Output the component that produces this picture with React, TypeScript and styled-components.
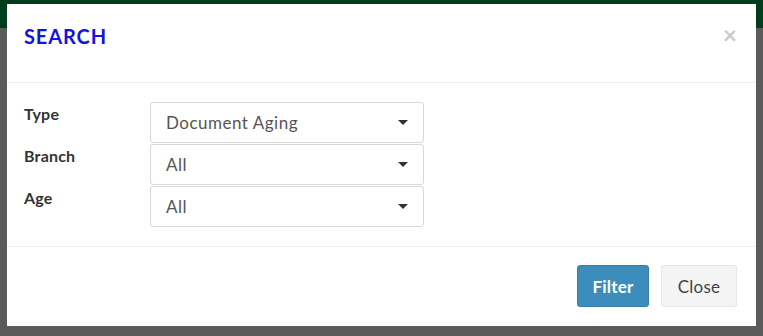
import React from 'react';
import styled, { createGlobalStyle } from 'styled-components';

const GlobalStyle = createGlobalStyle`
  html, body {
    margin: 0;
    padding: 0;
    background: #5b5b5b;
    font-family: Lato, "Noto Sans", sans-serif;
  }
`;

const Page = styled.div`
  position: relative;
  width: 763px;
  height: 336px;
  background: #5b5b5b;
  overflow: hidden;
`;

const TopBar = styled.div`
  height: 28px;
  background: #003d1c;
`;

const Modal = styled.div`
  position: absolute;
  left: 7px;
  top: 4px;
  width: 749px;
  height: 322px;
  background: #fff;
  display: flex;
  flex-direction: column;
`;

const Header = styled.div`
  border-bottom: 1px solid #f0f0f0;
  display: flex;
  align-items: flex-start;
  justify-content: space-between;
  padding: 0 19px 0 17px;
  box-sizing: border-box;
  height: 79px;
`;

const Title = styled.h4`
  margin: 20px 0 0;
  font-size: 20px;
  font-weight: 700;
  letter-spacing: 0.9px;
  color: #1414e0;
  line-height: 24px;
`;

const CloseX = styled.span`
  margin-top: 19px;
  font-size: 24px;
  font-weight: 700;
  color: #c9c9c9;
  line-height: 24px;
`;

const Body = styled.div`
  padding: 19px 17px 19px 17px;
  border-bottom: 1px solid #f0f0f0;
  display: grid;
  grid-template-columns: 126px 274px;
  row-gap: 1px;
`;

const Label = styled.label`
  font-size: 16px;
  font-weight: 700;
  letter-spacing: 0.2px;
  color: #333;
  line-height: 20px;
  padding-top: 2px;
`;

const Select = styled.div`
  height: 41px;
  box-sizing: border-box;
  border: 1px solid #d8d8d8;
  border-radius: 3px;
  display: flex;
  align-items: center;
  justify-content: space-between;
  padding: 0 15px 0 15px;
  font-size: 17px;
  letter-spacing: 0.5px;
  color: #555;
`;

const Caret = styled.span`
  width: 0;
  height: 0;
  border-left: 5px solid transparent;
  border-right: 5px solid transparent;
  border-top: 5px solid #333;
`;

const Footer = styled.div`
  flex: 1;
  display: flex;
  justify-content: flex-end;
  align-items: flex-start;
  gap: 12px;
  padding: 18px 19px 0 0;
`;

const Button = styled.button<{ $primary?: boolean }>`
  height: 42px;
  width: ${p => (p.$primary ? '72px' : '76px')};
  padding: 0;
  font-family: inherit;
  font-size: 17px;
  letter-spacing: 0.2px;
  border-radius: 3px;
  border: 1px solid ${p => (p.$primary ? '#367fa9' : '#e6e6e6')};
  background: ${p => (p.$primary ? '#3c8dbc' : '#f4f4f4')};
  color: ${p => (p.$primary ? '#fff' : '#444')};
  font-weight: ${p => (p.$primary ? 700 : 400)};
`;

const fields = [
  { label: 'Type', value: 'Document Aging' },
  { label: 'Branch', value: 'All' },
  { label: 'Age', value: 'All' },
];

export default function App() {
  return (
    <>
      <GlobalStyle />
      <Page>
        <TopBar />
        <Modal>
          <Header>
            <Title>SEARCH</Title>
            <CloseX>×</CloseX>
          </Header>
          <Body>
            {fields.map(f => (
              <React.Fragment key={f.label}>
                <Label>{f.label}</Label>
                <Select>
                  {f.value}
                  <Caret />
                </Select>
              </React.Fragment>
            ))}
          </Body>
          <Footer>
            <Button $primary>Filter</Button>
            <Button>Close</Button>
          </Footer>
        </Modal>
      </Page>
    </>
  );
}
